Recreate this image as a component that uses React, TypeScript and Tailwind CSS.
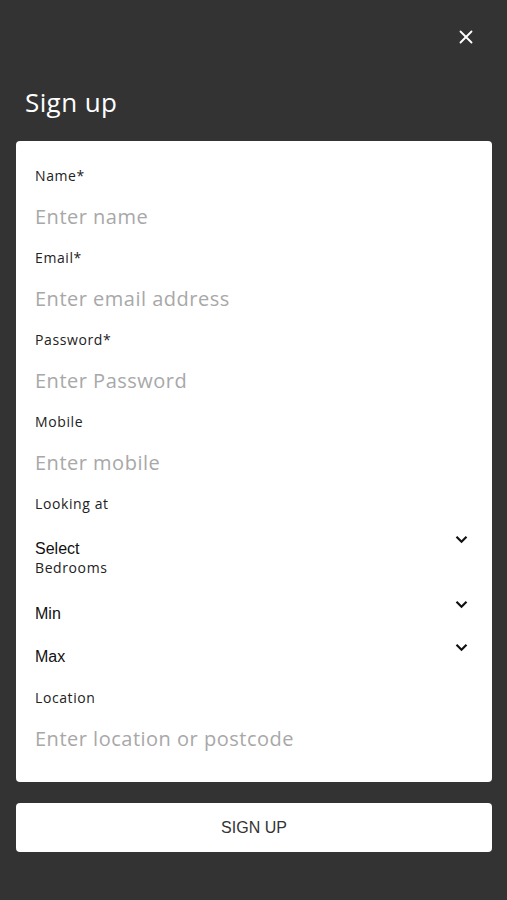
import { X } from "lucide-react";

const poppins = { fontFamily: '"Open Sans", "Noto Sans", sans-serif' };
const arial = { fontFamily: '"Liberation Sans", Arial, sans-serif' };

function Chevron() {
  return (
    <svg width="13" height="9" viewBox="0 0 13 9" className="-translate-y-[10px] text-[#111]">
      <path d="M1.5 1.8 L6.5 6.8 L11.5 1.8" fill="none" stroke="currentColor" strokeWidth="2.2" />
    </svg>
  );
}

function Label({ children }: { children: string }) {
  return (
    <div className="flex h-[41px] items-center text-[14px] font-medium tracking-[0.6px] text-[#222]">
      {children}
    </div>
  );
}

function Field({ label, placeholder }: { label: string; placeholder: string }) {
  return (
    <>
      <Label>{label}</Label>
      <div className="flex h-[41px] items-center text-[20px] tracking-[0.5px] text-[#a8a8a8]">
        {placeholder}
      </div>
    </>
  );
}

export default function App() {
  return (
    <div className="min-h-screen bg-[#333333] pl-4 pr-[15px]" style={poppins}>
      <div className="flex h-[74px] items-center justify-end pr-[15px]">
        <X className="h-[22px] w-[22px] text-white" strokeWidth={2} />
      </div>
      <h1 className="pl-[9px] text-[26px] leading-[56px] tracking-[0.4px] text-white">Sign up</h1>

      <div className="mt-[11px] rounded-[4px] bg-white pt-[14px] pb-[23px] pl-[19px] pr-[24px]">
        <Field label="Name*" placeholder="Enter name" />
        <Field label="Email*" placeholder="Enter email address" />
        <Field label="Password*" placeholder="Enter Password" />
        <Field label="Mobile" placeholder="Enter mobile" />
        <Label>Looking at</Label>

        <div className="mt-[15px] flex h-[20px] items-center justify-between text-[16px] text-[#111]" style={arial}>
          <span>Select</span>
          <Chevron />
        </div>
        <div className="flex h-[16px] items-center text-[14px] font-medium tracking-[0.6px] text-[#222]">
          Bedrooms
        </div>

        <div className="mt-[29px] flex h-[20px] items-center justify-between text-[16px] text-[#111]" style={arial}>
          <span>Min</span>
          <Chevron />
        </div>
        <div className="mt-[23px] flex h-[20px] items-center justify-between text-[16px] text-[#111]" style={arial}>
          <span>Max</span>
          <Chevron />
        </div>

        <div className="mt-[10px]">
          <Field label="Location" placeholder="Enter location or postcode" />
        </div>
      </div>

      <button
        className="mt-[21px] flex h-[49px] w-full items-center justify-center rounded-[4px] bg-white text-[16px] text-[#333]"
        style={arial}
      >
        SIGN UP
      </button>
    </div>
  );
}
